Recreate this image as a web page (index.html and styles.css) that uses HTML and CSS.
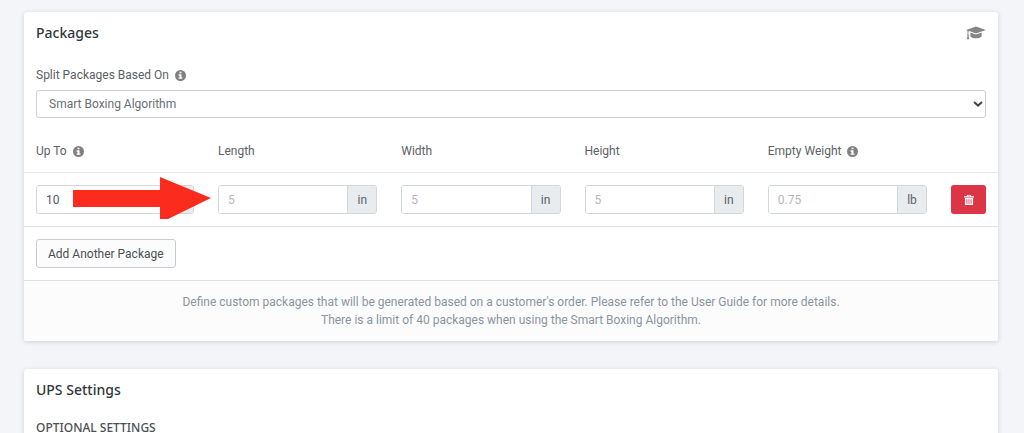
FILE: index.html
```html
<!DOCTYPE html>
<html lang="en">
<head>
<meta charset="utf-8">
<meta name="viewport" content="width=device-width, initial-scale=1">
<title>Packages</title>
<link rel="stylesheet" href="styles.css">
</head>
<body>
<svg width="0" height="0" class="icon-defs" aria-hidden="true">
    <symbol id="info" viewBox="0 0 16 16">
        <path fill-rule="evenodd" d="M8 0a8 8 0 1 0 0 16A8 8 0 0 0 8 0zM6.6 2.4h2.8v2.4H6.6zM5.2 6.2h4.2v4.6h1.4v2H5.2v-2h1.4V8.2H5.2z"/>
    </symbol>
    <symbol id="cap" viewBox="0 0 20 14">
        <path d="M10 0.4L19.8 3.9 10 7.4 3.2 5.1 2.4 5.8v2.8l.5.7-.3.6.6 3.3H.9l.6-3.3-.4-.6.4-.7V5L.2 3.9z"/>
        <path d="M4.4 6.4L10 8.4l5.6-2v4c-1.2 1.3-3.2 1.9-5.6 1.9s-4.4-.6-5.6-1.9z"/>
    </symbol>
    <symbol id="trash" viewBox="0 0 12 12">
        <path fill-rule="evenodd" d="M3.4 0h5.2v1.5H12V3H0V1.5h3.4zM4.5 1v.6h3V1zM1.1 3.5h9.8V12H1.1zM3 5v5.5h1V5zm2.5 0v5.5h1V5zM8 5v5.5h1V5z"/>
    </symbol>
</svg>
<main>
<section class="card">
    <div class="card-header">
        <h2>Packages</h2>
        <a href="#" class="guide" aria-label="User Guide"><svg><use href="#cap"/></svg></a>
    </div>
    <div class="split">
        <label for="split">Split Packages Based On <svg class="info"><use href="#info"/></svg></label>
        <div class="select">
            <select id="split" name="split">
                <option>Smart Boxing Algorithm</option>
            </select>
            <svg viewBox="0 0 10 6"><path d="M1 1l4 3.6L9 1"/></svg>
        </div>
    </div>
    <table class="packages">
        <thead>
            <tr>
                <th class="upto"><label for="upto">Up To <svg class="info"><use href="#info"/></svg></label></th>
                <th><label for="length">Length</label></th>
                <th><label for="width">Width</label></th>
                <th><label for="height">Height</label></th>
                <th><label for="weight">Empty Weight <svg class="info"><use href="#info"/></svg></label></th>
                <th class="action"></th>
            </tr>
        </thead>
        <tbody>
            <tr>
                <td class="pointed">
                    <div class="input-group"><input type="text" id="upto" value="10"><span>lb</span></div>
                    <svg class="arrow" viewBox="0 0 138 42"><path d="M0 13h87V0l51 21-43 21h-8V30H0z"/></svg>
                </td>
                <td><div class="input-group"><input type="text" id="length" placeholder="5"><span>in</span></div></td>
                <td><div class="input-group"><input type="text" id="width" placeholder="5"><span>in</span></div></td>
                <td><div class="input-group"><input type="text" id="height" placeholder="5"><span>in</span></div></td>
                <td><div class="input-group"><input type="text" id="weight" placeholder="0.75"><span>lb</span></div></td>
                <td><button type="button" class="btn-delete" aria-label="Delete package"><svg><use href="#trash"/></svg></button></td>
            </tr>
        </tbody>
    </table>
    <div class="add">
        <button type="button" class="btn">Add Another Package</button>
    </div>
    <div class="card-footer">
        Define custom packages that will be generated based on a customer's order. Please refer to the User Guide for more details.<br>
        There is a limit of 40 packages when using the Smart Boxing Algorithm.
    </div>
</section>
<section class="card">
    <div class="card-header">
        <h2>UPS Settings</h2>
    </div>
    <div class="settings">
        <h3>Optional Settings</h3>
    </div>
</section>
</main>
</body>
</html>
```
FILE: styles.css
```css
* {
	box-sizing: border-box;
}
body {
	margin: 0;
	background: #f3f5f8;
	color: #5c6166;
	font: 12px/18px Roboto, "Open Sans", sans-serif;
}
.icon-defs {
	position: absolute;
}
main {
	padding: 12px 26px 0 24px;
}
.card {
	background: #fff;
	border-radius: 3px;
	box-shadow: 0 1px 5px rgba(40,50,60,0.18);
	margin-bottom: 28px;
}
.card:last-child {
	margin-bottom: 0;
}
.card-header {
	display: flex;
	justify-content: space-between;
	align-items: center;
	padding: 11px 12px;
}
h2 {
	margin: 0;
	font: 500 14px/20px "Noto Sans", sans-serif;
	color: #32373c;
}
.guide svg {
	display: block;
	width: 20px;
	height: 14px;
	fill: #858585;
}
.info {
	width: 11px;
	height: 11px;
	margin-left: 3px;
	vertical-align: -2px;
	fill: #808080;
}
.split {
	padding: 12px 12px 0;
}
.split label {
	display: block;
	margin-bottom: 6px;
}
.select {
	position: relative;
}
.select svg {
	position: absolute;
	right: 3px;
	top: 11px;
	width: 10px;
	height: 6px;
	fill: none;
	stroke: #444;
	stroke-width: 2;
	pointer-events: none;
}
select {
	display: block;
	width: 100%;
	height: 28px;
	padding: 0 12px;
	appearance: none;
	background: #fff;
	border: 1px solid #ced2d6;
	border-radius: 3px;
	font: inherit;
	color: #6a6f74;
}
.packages {
	width: 100%;
	margin-top: 12px;
	table-layout: fixed;
	border-collapse: collapse;
}
th {
	padding: 12px;
	text-align: left;
	font-weight: 400;
}
th.upto {
	width: 182px;
}
th.action {
	width: 59px;
}
td {
	padding: 12px;
	border-top: 1px solid #e6e8ea;
	border-bottom: 1px solid #dfe2e5;
}
.input-group {
	display: flex;
	height: 29px;
	border: 1px solid #d2d7dc;
	border-radius: 3px;
	overflow: hidden;
}
.input-group input {
	flex: 1;
	min-width: 0;
	padding: 0 9px;
	border: 0;
	background: #fff;
	font: inherit;
	color: #555a5f;
}
.input-group input::placeholder {
	color: #b4b8bc;
}
.input-group span {
	width: 29px;
	border-left: 1px solid #d2d7dc;
	background: #e9ecef;
	line-height: 28px;
	text-align: center;
}
.pointed {
	position: relative;
}
/* callout pointing at the dimensions, lies over the first field */
.arrow {
	position: absolute;
	left: 49px;
	top: 4px;
	width: 138px;
	height: 42px;
	fill: #fb2b1d;
}
.btn-delete {
	display: flex;
	align-items: center;
	justify-content: center;
	width: 100%;
	height: 29px;
	padding: 0;
	border: 0;
	border-radius: 3px;
	background: #dc3545;
}
.btn-delete svg {
	width: 10px;
	height: 10px;
	fill: #fff;
}
.add {
	padding: 12px;
}
.btn {
	height: 29px;
	padding: 0 11px;
	border: 1px solid #c8ccd2;
	border-radius: 3px;
	background: #fcfcfd;
	font: inherit;
	color: #4a4f54;
}
.card-footer {
	padding: 12px;
	border-top: 1px solid #dfe2e5;
	border-radius: 0 0 3px 3px;
	background: #fcfcfd;
	text-align: center;
	color: #8b949d;
}
.settings {
	padding: 8px 12px 24px;
}
h3 {
	margin: 0;
	font: 500 12px/18px "Noto Sans", sans-serif;
	text-transform: uppercase;
	color: #4a4f54;
}
```
